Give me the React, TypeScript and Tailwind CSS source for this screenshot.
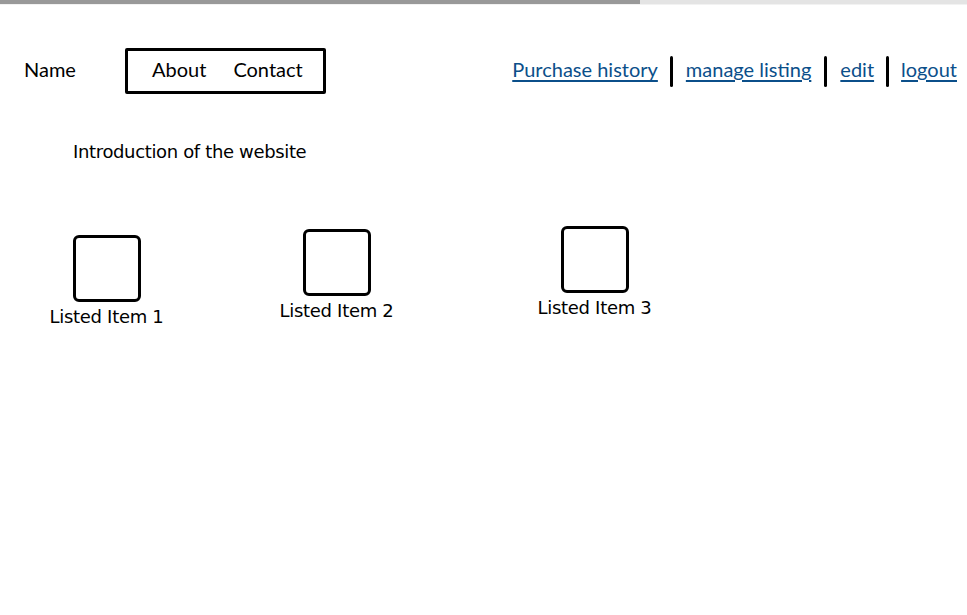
import React from "react";

const hand = { fontFamily: "Lato, 'Open Sans', sans-serif" };

function Item({ label, mt }: { label: string; mt: string }) {
  return (
    <div className={`flex flex-col items-center ${mt}`}>
      <div className="w-[68px] h-[67px] border-[3px] border-black rounded-[6px] bg-white" />
      <div className="whitespace-nowrap text-[18px] leading-[22px] mt-[4px] text-black font-['DejaVu_Sans',Verdana,sans-serif] tracking-[-0.3px]">
        {label}
      </div>
    </div>
  );
}

export default function App() {
  return (
    <div className="w-[967px] h-[615px] bg-white overflow-hidden relative">
      <div className="flex h-[4px]">
        <div className="w-[640px] bg-[#999999]" />
        <div className="flex-1 bg-[#e4e4e4]" />
      </div>
      <div className="h-[1px] bg-[#f2f2f2]" />

      <div className="flex items-center mt-[43px] pl-[24px] pr-[10px]" style={hand}>
        <div className="w-[101px] text-[20px] text-black -translate-y-[2px]">Name</div>
        <div className="w-[201px] h-[46px] border-[3px] border-black rounded-[2px] flex items-center pl-[24px] gap-[27px] text-[20px] text-black">
          <span className="-translate-y-[2px]">About</span>
          <span className="-translate-y-[2px]">Contact</span>
        </div>
        <div className="ml-auto flex items-center text-[20px] text-[#0b4f8a]">
          <a className="underline underline-offset-[3px] -translate-y-[2px]">Purchase history</a>
          <span className="w-[3px] h-[31px] bg-black ml-[12px] mr-[13px] rounded-full" />
          <a className="underline underline-offset-[3px] -translate-y-[2px]">manage listing</a>
          <span className="w-[3px] h-[31px] bg-black ml-[13px] mr-[13px] rounded-full" />
          <a className="underline underline-offset-[3px] -translate-y-[2px]">edit</a>
          <span className="w-[3px] h-[31px] bg-black ml-[12px] mr-[12px] rounded-full" />
          <a className="underline underline-offset-[3px] -translate-y-[2px]">logout</a>
        </div>
      </div>

      <div className="pl-[73px] mt-[47px] text-[18px] leading-[22px] text-black font-['DejaVu_Sans',Verdana,sans-serif] tracking-[-0.35px]">
        Introduction of the website
      </div>

      <div className="flex items-start pl-[50px]">
        <div className="w-[113px]"><Item label="Listed Item 1" mt="mt-[72px]" /></div>
        <div className="w-[113px] ml-[117px]"><Item label="Listed Item 2" mt="mt-[66px]" /></div>
        <div className="w-[113px] ml-[145px]"><Item label="Listed Item 3" mt="mt-[63px]" /></div>
      </div>
    </div>
  );
}
